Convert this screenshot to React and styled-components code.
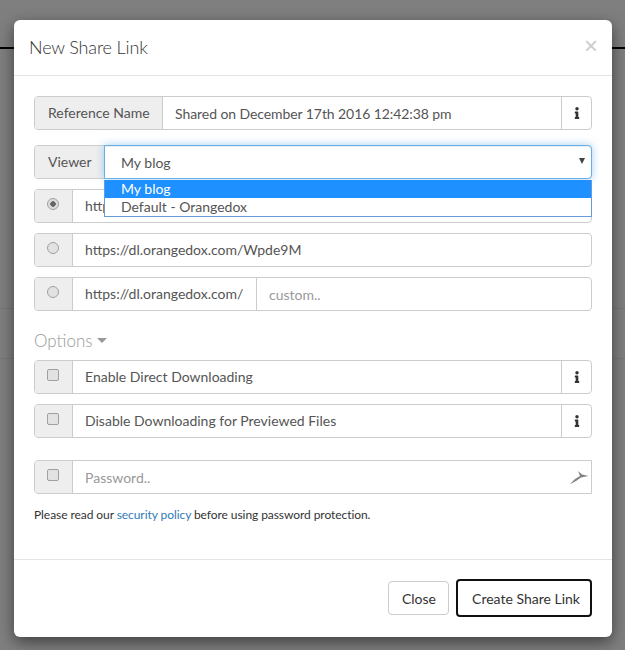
import React from "react";
import styled, { createGlobalStyle } from "styled-components";
import { FaInfo } from "react-icons/fa";

const Global = createGlobalStyle`
  html, body { margin: 0; padding: 0; background: #7f7f7f; }
  body { font-family: Lato, "Liberation Sans", sans-serif; font-size: 14px; color: #555; }
  * { box-sizing: border-box; }
`;

const Backdrop = styled.div`
  position: relative;
  width: 625px;
  height: 650px;
  overflow: hidden;
  background: #7f7f7f;
  padding: 20px 13px 13px 14px;
`;
const PageRule = styled.div`
  position: absolute;
  left: 0;
  right: 0;
  top: ${p => p.$top}px;
  height: ${p => p.$h}px;
  background: ${p => p.$c};
`;
const Modal = styled.div`
  position: relative;
  height: 617px;
  background: #fff;
  border-radius: 6px;
  box-shadow: 0 5px 15px rgba(0, 0, 0, 0.5);
  display: flex;
  flex-direction: column;
`;
const Header = styled.div`
  height: 56px;
  border-bottom: 1px solid #e5e5e5;
  padding: 0 15px 2px;
  display: flex;
  align-items: center;
  justify-content: space-between;
`;
const Title = styled.h4`
  margin: 0;
  font-size: 18px;
  font-weight: 300;
  letter-spacing: -0.15px;
  color: #333;
`;
const CloseX = styled.span`
  font-family: "Liberation Sans", sans-serif;
  font-size: 24px;
  font-weight: 400;
  line-height: 1;
  color: #ccc;
  transform: translate(1px, -1px);
`;
const Body = styled.div`
  flex: 1;
  padding: 20px 20px 0;
  display: flex;
  flex-direction: column;
`;
const Group = styled.div`
  position: relative;
  display: flex;
  height: 34px;
  margin-bottom: ${p => p.$mb ?? 10}px;
  background: #fff;
  border: 1px solid #ccc;
  border-radius: ${p => p.$square ? "4px 0 0 4px" : "4px"};
`;
const Addon = styled.div`
  flex: none;
  width: ${p => p.$w ? p.$w + "px" : "auto"};
  padding: ${p => p.$w ? "0" : "0 12px 2px 13px"};
  display: flex;
  align-items: center;
  justify-content: center;
  background: #eee;
  border-right: 1px solid #ccc;
  border-radius: 3px 0 0 3px;
  color: #555;
`;
const Field = styled.div`
  flex: 1;
  min-width: 0;
  display: flex;
  align-items: center;
  padding: 0 12px ${p => p.$up ? 2 : 0}px;
  color: ${p => p.$ph ? "#999" : "#555"};
  white-space: nowrap;
  overflow: hidden;
`;
const NameField = styled(Field)`
  letter-spacing: -0.08px;
  padding-left: 12.5px;
`;
const Prefix = styled(Field)`
  flex: none;
  width: 184px;
  border-right: 1px solid #ccc;
`;
const InfoBtn = styled.div`
  flex: none;
  width: 30px;
  display: flex;
  align-items: center;
  justify-content: center;
  border-left: 1px solid #ccc;
  color: #333;
  font-size: 12px;
`;
const Mark = styled.input`
  appearance: none;
  margin: 0;
  width: 12px;
  height: 12px;
  transform: translate(-1px, -2px);
  background: #e2e2e2;
  border: 1px solid #a0a0a0;
  border-radius: ${p => p.type === "radio" ? "50%" : "2px"};
  &:checked {
    background: radial-gradient(circle, #666 0, #666 2.5px, #ddd 3px);
  }
`;
const SelectBox = styled.div`
  position: absolute;
  left: 69px;
  top: -1px;
  right: -1px;
  height: 34px;
  background: #fff;
  border: 1px solid #66afe9;
  border-radius: 0 4px 4px 0;
  box-shadow: inset 0 1px 1px rgba(0, 0, 0, 0.075), 0 0 8px rgba(102, 175, 233, 0.6);
  display: flex;
  align-items: center;
  justify-content: space-between;
  padding: 0 6px 0 16px;
  color: #555;
`;
const Caret = styled.span`
  width: 0;
  height: 0;
  border-left: 3px solid transparent;
  border-right: 3px solid transparent;
  border-top: 6px solid #444;
  margin-top: -2px;
`;
const Options = styled.div`
  position: absolute;
  left: 69px;
  right: -1px;
  top: 34px;
  height: 37px;
  background: #fff;
  border: 1px solid #6a9bd8;
  border-top: 0;
  z-index: 2;
`;
const Option = styled.div`
  height: 18px;
  line-height: 18px;
  padding-left: 16px;
  background: ${p => p.$active ? "#1e90ff" : "#fff"};
  color: ${p => p.$active ? "#fff" : "#555"};
`;
const OptionsLabel = styled.div`
  height: 29px;
  margin: 15px 0 5px;
  display: flex;
  align-items: center;
  gap: 4px;
  font-size: 17px;
  font-weight: 300;
  color: #999;
`;
const DownTri = styled.span`
  width: 0;
  height: 0;
  border-left: 5px solid transparent;
  border-right: 5px solid transparent;
  border-top: 5px solid #999;
`;
const PassIcon = styled.svg`
  position: absolute;
  right: 2px;
  top: 9px;
`;
const Note = styled.p`
  margin: 11px 0 0;
  font-size: 12px;
  line-height: 20px;
  letter-spacing: -0.07px;
  color: #333;
`;
const Link = styled.a`
  color: #337ab7;
  text-decoration: none;
`;
const Footer = styled.div`
  height: 78px;
  border-top: 1px solid #e5e5e5;
  padding: 21px 20px 0;
  display: flex;
  justify-content: flex-end;
  align-items: flex-start;
  gap: 7px;
`;
const Button = styled.button`
  height: 34px;
  padding: 0 12px 0 13px;
  background: #fff;
  border: 1px solid #ccc;
  border-radius: 4px;
  font: 14px Lato, "Liberation Sans", sans-serif;
  color: #333;
  margin: 0;
`;
const PrimaryButton = styled(Button)`
  width: 136px;
  height: 38px;
  padding: 0 0 0 4px;
  border: 2px solid #111;
  margin-top: -2px;
`;

export default function App() {
  return (
    <Backdrop>
      <Global />
      <PageRule $top={47} $h={2} $c="#000" />
      <PageRule $top={308} $h={1} $c="#777" />
      <PageRule $top={358} $h={1} $c="#777" />
      <Modal>
        <Header>
          <Title>New Share Link</Title>
          <CloseX>×</CloseX>
        </Header>
        <Body>
          <Group $mb={15}>
            <Addon>Reference Name</Addon>
            <NameField>Shared on December 17th 2016 12:42:38 pm</NameField>
            <InfoBtn><FaInfo /></InfoBtn>
          </Group>
          <Group>
            <Addon>Viewer</Addon>
            <SelectBox>
              <span>My blog</span>
              <Caret />
            </SelectBox>
            <Options>
              <Option $active>My blog</Option>
              <Option>Default - Orangedox</Option>
            </Options>
          </Group>
          <Group>
            <Addon $w={38}><Mark type="radio" disabled defaultChecked name="u" /></Addon>
            <Field $up>https://dl.orangedox.com/Wpde9M</Field>
          </Group>
          <Group>
            <Addon $w={38}><Mark type="radio" disabled name="u2" /></Addon>
            <Field $up>https://dl.orangedox.com/Wpde9M</Field>
          </Group>
          <Group $mb={0}>
            <Addon $w={38}><Mark type="radio" disabled name="u3" /></Addon>
            <Prefix $up>https://dl.orangedox.com/</Prefix>
            <Field $ph>custom..</Field>
          </Group>
          <OptionsLabel>Options <DownTri /></OptionsLabel>
          <Group>
            <Addon $w={38}><Mark type="checkbox" disabled /></Addon>
            <Field $up>Enable Direct Downloading</Field>
            <InfoBtn><FaInfo /></InfoBtn>
          </Group>
          <Group $mb={22}>
            <Addon $w={38}><Mark type="checkbox" disabled /></Addon>
            <Field $up>Disable Downloading for Previewed Files</Field>
            <InfoBtn><FaInfo /></InfoBtn>
          </Group>
          <Group $mb={0} $square>
            <Addon $w={38}><Mark type="checkbox" disabled /></Addon>
            <Field $ph>Password..</Field>
            <PassIcon width="20" height="16" viewBox="0 0 20 16">
              <path d="M0.5 14.5 L6 9 L11 6 L9 1 L13 4.5 L19.5 6 L12 7.5 L7 11 Z" fill="#808080" />
            </PassIcon>
          </Group>
          <Note>Please read our <Link href="#">security policy</Link> before using password protection.</Note>
        </Body>
        <Footer>
          <Button>Close</Button>
          <PrimaryButton>Create Share Link</PrimaryButton>
        </Footer>
      </Modal>
    </Backdrop>
  );
}
